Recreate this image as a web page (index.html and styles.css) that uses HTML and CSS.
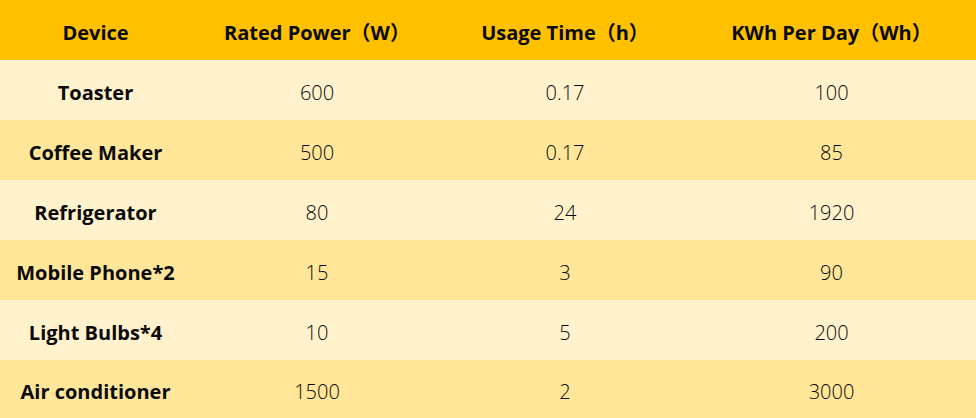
FILE: index.html
```html
<!DOCTYPE html>
<html>
<head>
<meta charset="utf-8">
<link rel="stylesheet" href="styles.css">
</head>
<body>
<table class="energy">
  <colgroup>
    <col class="c1"><col class="c2"><col class="c3"><col class="c4">
  </colgroup>
  <thead>
    <tr><th>Device</th><th>Rated Power（W）</th><th>Usage Time（h）</th><th>KWh Per Day（Wh）</th></tr>
  </thead>
  <tbody>
    <tr class="light"><th>Toaster</th><td>600</td><td>0.17</td><td>100</td></tr>
    <tr class="dark"><th>Coffee Maker</th><td>500</td><td>0.17</td><td>85</td></tr>
    <tr class="light"><th>Refrigerator</th><td>80</td><td>24</td><td>1920</td></tr>
    <tr class="dark"><th>Mobile Phone*2</th><td>15</td><td>3</td><td>90</td></tr>
    <tr class="light"><th>Light Bulbs*4</th><td>10</td><td>5</td><td>200</td></tr>
    <tr class="dark"><th>Air conditioner</th><td>1500</td><td>2</td><td>3000</td></tr>
  </tbody>
</table>
</body>
</html>
```
FILE: styles.css
```css
html, body {
  margin: 0;
  padding: 0;
  background: #ffffff;
}
.energy {
  width: 976px;
  border-collapse: collapse;
  table-layout: fixed;
  font-family: "Open Sans", "Noto Sans CJK SC", sans-serif;
  font-size: 20px;
  color: #0a0a0a;
}
.c1 { width: 191px; }
.c2 { width: 252px; }
.c3 { width: 244px; }
.c4 { width: 289px; }
.energy th, .energy td {
  padding: 5px 0 0 0;
  text-align: center;
  vertical-align: middle;
  line-height: 24px;
}
.energy thead tr {
  background: #ffc000;
  height: 60px;
}
.energy tbody tr { height: 60px; }
.energy tbody tr:last-child { height: 58px; }
.energy th { font-weight: 700; }
.energy td { font-weight: 300; }
.light { background: #fff2cc; }
.dark { background: #ffe699; }
```
